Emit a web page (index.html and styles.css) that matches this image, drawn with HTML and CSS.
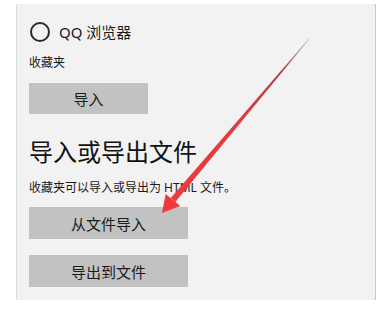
FILE: index.html
```html
<!DOCTYPE html>
<html lang="zh-CN">
<head>
<meta charset="utf-8">
<link rel="stylesheet" href="styles.css">
</head>
<body>
<div class="panel">
  <div class="radio-row">
    <span class="radio"></span>
    <span class="radio-label">QQ 浏览器</span>
  </div>
  <div class="small first-small">收藏夹</div>
  <div class="btn btn-short">导入</div>
  <h2 class="heading">导入或导出文件</h2>
  <div class="small desc">收藏夹可以导入或导出为 HTML 文件。</div>
  <div class="btn btn-long btn-first">从文件导入</div>
  <div class="btn btn-long btn-second">导出到文件</div>
</div>
<svg class="arrow" width="391" height="310" viewBox="0 0 391 310">
  <defs>
    <linearGradient id="g" x1="309" y1="39" x2="173" y2="200" gradientUnits="userSpaceOnUse">
      <stop offset="0" stop-color="#8a4a55" stop-opacity="0.4"/>
      <stop offset="0.2" stop-color="#b03a44"/>
      <stop offset="0.5" stop-color="#e03a3e"/>
      <stop offset="1" stop-color="#ec3b3d"/>
    </linearGradient>
  </defs>
  <polygon points="309.2,39.2 308.8,38.8 170.7,198.1 175.3,201.9" fill="url(#g)"/>
  <polygon points="162,213 165.7,193.9 180.3,206.1" fill="#ec3b3d"/>
</svg>
</body>
</html>
```
FILE: styles.css
```css
html, body {
  margin: 0;
  padding: 0;
  background: #ffffff;
}
body {
  width: 391px;
  height: 310px;
  position: relative;
  overflow: hidden;
  font-family: "Noto Sans", "Noto Sans CJK SC", sans-serif;
  color: #111;
}
.panel {
  margin: 4px 0 0 16px;
  width: 360px;
  height: 296px;
  box-sizing: border-box;
  background: #f2f2f2;
  border-left: 1px solid #dcdcdc;
  border-right: 1px solid #c8c8c8;
  padding: 18px 0 0 12px;
  display: flex;
  flex-direction: column;
  align-items: flex-start;
}
.radio-row {
  display: flex;
  align-items: center;
  height: 20px;
}
.radio {
  width: 20px;
  height: 20px;
  box-sizing: border-box;
  border: 2px solid #2a2a2a;
  border-radius: 50%;
  margin-left: 1px;
}
.radio-label {
  margin-left: 9px;
  font-size: 15px;
  line-height: 20px;
  color: #1a1a1a;
}
.small {
  font-size: 12px;
  line-height: 16px;
  color: #1a1a1a;
}
.first-small {
  margin-top: 13px;
}
.btn {
  background: #c2c2c2;
  font-size: 15px;
  color: #1a1a1a;
  display: flex;
  align-items: center;
  justify-content: center;
}
.btn-short {
  margin-top: 12px;
  width: 119px;
  height: 31px;
}
.heading {
  margin: 23px 0 0 0;
  font-size: 24px;
  line-height: 30px;
  font-weight: normal;
  color: #111;
}
.desc {
  margin-top: 13px;
}
.btn-long {
  width: 159px;
  height: 32px;
}
.btn-first {
  margin-top: 11px;
}
.btn-second {
  margin-top: 16px;
}
.arrow {
  position: absolute;
  left: 0;
  top: 0;
  pointer-events: none;
}
```
